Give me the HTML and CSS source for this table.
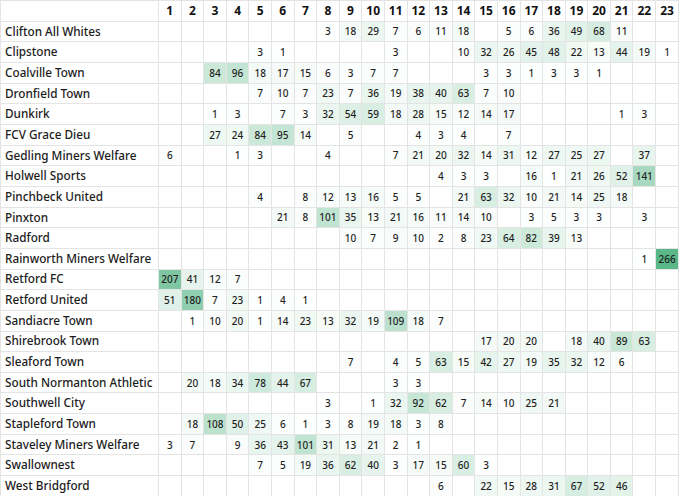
FILE: index.html
```html
<!DOCTYPE html>
<html lang="en">
<head>
<meta charset="utf-8">
<title>Matrix</title>
<link rel="stylesheet" href="styles.css">
</head>
<body>
<table class="grid">
<colgroup><col class="c-team"><col span="23" class="c-num"></colgroup>
<thead>
<tr><th class="team"></th><th>1</th><th>2</th><th>3</th><th>4</th><th>5</th><th>6</th><th>7</th><th>8</th><th>9</th><th>10</th><th>11</th><th>12</th><th>13</th><th>14</th><th>15</th><th>16</th><th>17</th><th>18</th><th>19</th><th>20</th><th>21</th><th>22</th><th>23</th></tr>
</thead>
<tbody>
<tr><td class="team">Clifton All Whites</td><td></td><td></td><td></td><td></td><td></td><td></td><td></td><td style="--v:.011">3</td><td style="--v:.068">18</td><td style="--v:.109">29</td><td style="--v:.026">7</td><td style="--v:.023">6</td><td style="--v:.041">11</td><td style="--v:.068">18</td><td></td><td style="--v:.019">5</td><td style="--v:.023">6</td><td style="--v:.135">36</td><td style="--v:.184">49</td><td style="--v:.256">68</td><td style="--v:.041">11</td><td></td><td></td></tr>
<tr><td class="team">Clipstone</td><td></td><td></td><td></td><td></td><td style="--v:.011">3</td><td style="--v:.004">1</td><td></td><td></td><td></td><td></td><td style="--v:.011">3</td><td></td><td></td><td style="--v:.038">10</td><td style="--v:.120">32</td><td style="--v:.098">26</td><td style="--v:.169">45</td><td style="--v:.180">48</td><td style="--v:.083">22</td><td style="--v:.049">13</td><td style="--v:.165">44</td><td style="--v:.071">19</td><td style="--v:.004">1</td></tr>
<tr><td class="team">Coalville Town</td><td></td><td></td><td style="--v:.316">84</td><td style="--v:.361">96</td><td style="--v:.068">18</td><td style="--v:.064">17</td><td style="--v:.056">15</td><td style="--v:.023">6</td><td style="--v:.011">3</td><td style="--v:.026">7</td><td style="--v:.026">7</td><td></td><td></td><td></td><td style="--v:.011">3</td><td style="--v:.011">3</td><td style="--v:.004">1</td><td style="--v:.011">3</td><td style="--v:.011">3</td><td style="--v:.004">1</td><td></td><td></td><td></td></tr>
<tr><td class="team">Dronfield Town</td><td></td><td></td><td></td><td></td><td style="--v:.026">7</td><td style="--v:.038">10</td><td style="--v:.026">7</td><td style="--v:.086">23</td><td style="--v:.026">7</td><td style="--v:.135">36</td><td style="--v:.071">19</td><td style="--v:.143">38</td><td style="--v:.150">40</td><td style="--v:.237">63</td><td style="--v:.026">7</td><td style="--v:.038">10</td><td></td><td></td><td></td><td></td><td></td><td></td><td></td></tr>
<tr><td class="team">Dunkirk</td><td></td><td></td><td style="--v:.004">1</td><td style="--v:.011">3</td><td></td><td style="--v:.026">7</td><td style="--v:.011">3</td><td style="--v:.120">32</td><td style="--v:.203">54</td><td style="--v:.222">59</td><td style="--v:.068">18</td><td style="--v:.105">28</td><td style="--v:.056">15</td><td style="--v:.045">12</td><td style="--v:.053">14</td><td style="--v:.064">17</td><td></td><td></td><td></td><td></td><td style="--v:.004">1</td><td style="--v:.011">3</td><td></td></tr>
<tr><td class="team">FCV Grace Dieu</td><td></td><td></td><td style="--v:.102">27</td><td style="--v:.090">24</td><td style="--v:.316">84</td><td style="--v:.357">95</td><td style="--v:.053">14</td><td></td><td style="--v:.019">5</td><td></td><td></td><td style="--v:.015">4</td><td style="--v:.011">3</td><td style="--v:.015">4</td><td></td><td style="--v:.026">7</td><td></td><td></td><td></td><td></td><td></td><td></td><td></td></tr>
<tr><td class="team">Gedling Miners Welfare</td><td style="--v:.023">6</td><td></td><td></td><td style="--v:.004">1</td><td style="--v:.011">3</td><td></td><td></td><td style="--v:.015">4</td><td></td><td></td><td style="--v:.026">7</td><td style="--v:.079">21</td><td style="--v:.075">20</td><td style="--v:.120">32</td><td style="--v:.053">14</td><td style="--v:.117">31</td><td style="--v:.045">12</td><td style="--v:.102">27</td><td style="--v:.094">25</td><td style="--v:.102">27</td><td></td><td style="--v:.139">37</td><td></td></tr>
<tr><td class="team">Holwell Sports</td><td></td><td></td><td></td><td></td><td></td><td></td><td></td><td></td><td></td><td></td><td></td><td></td><td style="--v:.015">4</td><td style="--v:.011">3</td><td style="--v:.011">3</td><td></td><td style="--v:.060">16</td><td style="--v:.004">1</td><td style="--v:.079">21</td><td style="--v:.098">26</td><td style="--v:.195">52</td><td style="--v:.530">141</td><td></td></tr>
<tr><td class="team">Pinchbeck United</td><td></td><td></td><td></td><td></td><td style="--v:.015">4</td><td></td><td style="--v:.030">8</td><td style="--v:.045">12</td><td style="--v:.049">13</td><td style="--v:.060">16</td><td style="--v:.019">5</td><td style="--v:.019">5</td><td></td><td style="--v:.079">21</td><td style="--v:.237">63</td><td style="--v:.120">32</td><td style="--v:.038">10</td><td style="--v:.079">21</td><td style="--v:.053">14</td><td style="--v:.094">25</td><td style="--v:.068">18</td><td></td><td></td></tr>
<tr><td class="team">Pinxton</td><td></td><td></td><td></td><td></td><td></td><td style="--v:.079">21</td><td style="--v:.030">8</td><td style="--v:.380">101</td><td style="--v:.132">35</td><td style="--v:.049">13</td><td style="--v:.079">21</td><td style="--v:.060">16</td><td style="--v:.041">11</td><td style="--v:.053">14</td><td style="--v:.038">10</td><td></td><td style="--v:.011">3</td><td style="--v:.019">5</td><td style="--v:.011">3</td><td style="--v:.011">3</td><td></td><td style="--v:.011">3</td><td></td></tr>
<tr><td class="team">Radford</td><td></td><td></td><td></td><td></td><td></td><td></td><td></td><td></td><td style="--v:.038">10</td><td style="--v:.026">7</td><td style="--v:.034">9</td><td style="--v:.038">10</td><td style="--v:.008">2</td><td style="--v:.030">8</td><td style="--v:.086">23</td><td style="--v:.241">64</td><td style="--v:.308">82</td><td style="--v:.147">39</td><td style="--v:.049">13</td><td></td><td></td><td></td><td></td></tr>
<tr><td class="team">Rainworth Miners Welfare</td><td></td><td></td><td></td><td></td><td></td><td></td><td></td><td></td><td></td><td></td><td></td><td></td><td></td><td></td><td></td><td></td><td></td><td></td><td></td><td></td><td></td><td style="--v:.004">1</td><td style="--v:1">266</td></tr>
<tr><td class="team">Retford FC</td><td style="--v:.778">207</td><td style="--v:.154">41</td><td style="--v:.045">12</td><td style="--v:.026">7</td><td></td><td></td><td></td><td></td><td></td><td></td><td></td><td></td><td></td><td></td><td></td><td></td><td></td><td></td><td></td><td></td><td></td><td></td><td></td></tr>
<tr><td class="team">Retford United</td><td style="--v:.192">51</td><td style="--v:.677">180</td><td style="--v:.026">7</td><td style="--v:.086">23</td><td style="--v:.004">1</td><td style="--v:.015">4</td><td style="--v:.004">1</td><td></td><td></td><td></td><td></td><td></td><td></td><td></td><td></td><td></td><td></td><td></td><td></td><td></td><td></td><td></td><td></td></tr>
<tr><td class="team">Sandiacre Town</td><td></td><td style="--v:.004">1</td><td style="--v:.038">10</td><td style="--v:.075">20</td><td style="--v:.004">1</td><td style="--v:.053">14</td><td style="--v:.086">23</td><td style="--v:.049">13</td><td style="--v:.120">32</td><td style="--v:.071">19</td><td style="--v:.410">109</td><td style="--v:.068">18</td><td style="--v:.026">7</td><td></td><td></td><td></td><td></td><td></td><td></td><td></td><td></td><td></td><td></td></tr>
<tr><td class="team">Shirebrook Town</td><td></td><td></td><td></td><td></td><td></td><td></td><td></td><td></td><td></td><td></td><td></td><td></td><td></td><td></td><td style="--v:.064">17</td><td style="--v:.075">20</td><td style="--v:.075">20</td><td></td><td style="--v:.068">18</td><td style="--v:.150">40</td><td style="--v:.335">89</td><td style="--v:.237">63</td><td></td></tr>
<tr><td class="team">Sleaford Town</td><td></td><td></td><td></td><td></td><td></td><td></td><td></td><td></td><td style="--v:.026">7</td><td></td><td style="--v:.015">4</td><td style="--v:.019">5</td><td style="--v:.237">63</td><td style="--v:.056">15</td><td style="--v:.158">42</td><td style="--v:.102">27</td><td style="--v:.071">19</td><td style="--v:.132">35</td><td style="--v:.120">32</td><td style="--v:.045">12</td><td style="--v:.023">6</td><td></td><td></td></tr>
<tr><td class="team">South Normanton Athletic</td><td></td><td style="--v:.075">20</td><td style="--v:.068">18</td><td style="--v:.128">34</td><td style="--v:.293">78</td><td style="--v:.165">44</td><td style="--v:.252">67</td><td></td><td></td><td></td><td style="--v:.011">3</td><td style="--v:.011">3</td><td></td><td></td><td></td><td></td><td></td><td></td><td></td><td></td><td></td><td></td><td></td></tr>
<tr><td class="team">Southwell City</td><td></td><td></td><td></td><td></td><td></td><td></td><td></td><td style="--v:.011">3</td><td></td><td style="--v:.004">1</td><td style="--v:.120">32</td><td style="--v:.346">92</td><td style="--v:.233">62</td><td style="--v:.026">7</td><td style="--v:.053">14</td><td style="--v:.038">10</td><td style="--v:.094">25</td><td style="--v:.079">21</td><td></td><td></td><td></td><td></td><td></td></tr>
<tr><td class="team">Stapleford Town</td><td></td><td style="--v:.068">18</td><td style="--v:.406">108</td><td style="--v:.188">50</td><td style="--v:.094">25</td><td style="--v:.023">6</td><td style="--v:.004">1</td><td style="--v:.011">3</td><td style="--v:.030">8</td><td style="--v:.071">19</td><td style="--v:.068">18</td><td style="--v:.011">3</td><td style="--v:.030">8</td><td></td><td></td><td></td><td></td><td></td><td></td><td></td><td></td><td></td><td></td></tr>
<tr><td class="team">Staveley Miners Welfare</td><td style="--v:.011">3</td><td style="--v:.026">7</td><td></td><td style="--v:.034">9</td><td style="--v:.135">36</td><td style="--v:.162">43</td><td style="--v:.380">101</td><td style="--v:.117">31</td><td style="--v:.049">13</td><td style="--v:.079">21</td><td style="--v:.008">2</td><td style="--v:.004">1</td><td></td><td></td><td></td><td></td><td></td><td></td><td></td><td></td><td></td><td></td><td></td></tr>
<tr><td class="team">Swallownest</td><td></td><td></td><td></td><td></td><td style="--v:.026">7</td><td style="--v:.019">5</td><td style="--v:.071">19</td><td style="--v:.135">36</td><td style="--v:.233">62</td><td style="--v:.150">40</td><td style="--v:.011">3</td><td style="--v:.064">17</td><td style="--v:.056">15</td><td style="--v:.226">60</td><td style="--v:.011">3</td><td></td><td></td><td></td><td></td><td></td><td></td><td></td><td></td></tr>
<tr><td class="team">West Bridgford</td><td></td><td></td><td></td><td></td><td></td><td></td><td></td><td></td><td></td><td></td><td></td><td></td><td style="--v:.023">6</td><td></td><td style="--v:.083">22</td><td style="--v:.056">15</td><td style="--v:.105">28</td><td style="--v:.117">31</td><td style="--v:.252">67</td><td style="--v:.195">52</td><td style="--v:.173">46</td><td></td><td></td></tr>
</tbody>
</table>
</body>
</html>
```

FILE: styles.css
```css
html, body {
  margin: 0;
  padding: 0;
  background: #ffffff;
}

body {
  font-family: "Noto Sans", Lato, sans-serif;
  color: #1f1f1f;
}

.grid {
  border-collapse: collapse;
  table-layout: fixed;
  width: 679px;
}

.grid tr {
  height: 20.66px;
}

.c-team {
  width: 158px;
}

.grid th,
.grid td {
  border: 1px solid #e4e4e4;
  padding: 0;
  text-align: center;
  vertical-align: middle;
  font-size: 10px;
  font-weight: 500;
  line-height: 1;
  white-space: nowrap;
  overflow: hidden;
  background: rgba(90, 183, 136, var(--v, 0));
}

.grid th {
  font-weight: 700;
  font-size: 12px;
  color: #111111;
}

.grid td.team {
  text-align: left;
  padding-left: 4px;
  font-size: 11.75px;
  color: #1c1c1c;
}
```
